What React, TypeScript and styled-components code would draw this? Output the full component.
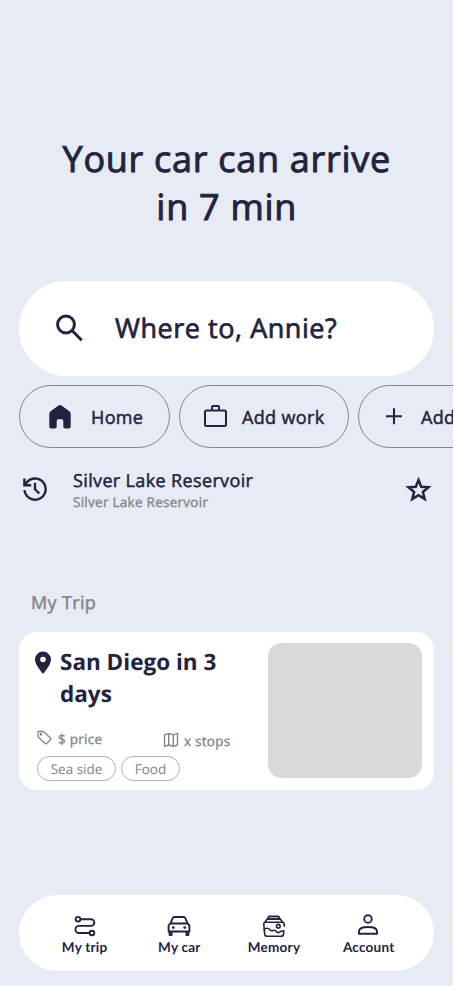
import React from "react";
import styled, { createGlobalStyle, css } from "styled-components";

const ink = "#23233f";
const grey = "#858585";

const GlobalStyle = createGlobalStyle`
  body { margin: 0; background: #fff; }
  * { box-sizing: border-box; }
`;

/* Open Sans at a weight between regular and semi-bold */
const medium = css`
  font-weight: 400;
  letter-spacing: 0.02em;
  -webkit-text-stroke: 0.026em currentColor;
`;

const Screen = styled.main`
  width: 453.4px;
  height: 986px;
  padding: 135px 0 0 19px;
  overflow: hidden;
  background: #e6ebf4;
  color: ${ink};
  font-family: "Open Sans", "Noto Sans", sans-serif;
  text-rendering: geometricPrecision;
`;

const Title = styled.h1`
  width: 415.4px;
  height: 146px;
  margin: 0;
  font-size: 36px;
  line-height: 48px;
  text-align: center;
  ${medium}
`;

const Search = styled.div`
  display: flex;
  align-items: center;
  width: 415.4px;
  height: 95px;
  padding: 0 0 3px 36px;
  border-radius: 48px;
  background: #fff;
  font-size: 27px;
  white-space: nowrap;
  ${medium}
  svg { margin: 3px 31px 0 0; }
`;

const Chips = styled.div`
  display: flex;
  gap: 9px;
  margin-top: 9px;
`;

const Chip = styled.button<{ $width: number; $pad: number; $gap: number }>`
  display: flex;
  flex: none;
  align-items: center;
  gap: ${(p) => p.$gap}px;
  width: ${(p) => p.$width}px;
  height: 62.5px;
  padding: 0 0 0 ${(p) => p.$pad}px;
  border: 1px solid #858585;
  border-radius: 32px;
  background: transparent;
  color: ${ink};
  font: 400 18px "Open Sans", sans-serif;
  white-space: nowrap;
  ${medium}
  span { margin-top: 2px; }
`;

const Recent = styled.section`
  display: flex;
  align-items: flex-start;
  width: 415.4px;
  height: 145.5px;
  padding: 20.5px 2px 0 3px;
  > svg { margin-top: 7.5px; }
`;

const Place = styled.div`
  flex: 1;
  margin-left: 25px;
`;

const PlaceName = styled.div`
  padding-top: 1px;
  font-size: 18px;
  line-height: 24px;
  ${medium}
`;

const PlaceDetail = styled.div`
  color: ${grey};
  font-size: 13.5px;
  line-height: 19px;
  ${medium}
`;

const SectionTitle = styled.h2`
  height: 39px;
  margin: 0 0 0 12px;
  color: ${grey};
  font-size: 18px;
  line-height: 20px;
  ${medium}
`;

const Card = styled.article`
  display: flex;
  justify-content: space-between;
  width: 415.4px;
  height: 158px;
  padding: 11px 12.5px 0 16px;
  border-radius: 18px;
  background: #fff;
`;

const Trip = styled.div`
  width: 215px;
`;

const TripHeading = styled.div`
  display: flex;
  gap: 9px;
  height: 84.5px;
  padding-top: 3px;
  svg { flex: none; margin-top: 5px; }
`;

const TripName = styled.h3`
  margin: 0;
  font-size: 22.5px;
  font-weight: 700;
  line-height: 32px;
`;

const Facts = styled.div`
  display: flex;
  justify-content: space-between;
  height: 28px;
  padding: 0 19.5px 0 1px;
  color: ${grey};
  font-size: 13.5px;
  line-height: 22px;
  ${medium}
`;

const Fact = styled.div<{ $drop?: number }>`
  display: flex;
  align-items: flex-start;
  gap: 5px;
  padding-top: ${(p) => p.$drop ?? 0}px;
  svg { margin-top: 2px; }
`;

const Tags = styled.div`
  display: flex;
  gap: 5px;
  padding-left: 2px;
`;

const Tag = styled.span<{ $width: number }>`
  width: ${(p) => p.$width}px;
  height: 25px;
  border: 1px solid #b0b0b0;
  border-radius: 13px;
  color: ${grey};
  font-size: 13.5px;
  line-height: 25px;
  text-align: center;
`;

const Photo = styled.div`
  width: 153.5px;
  height: 135px;
  border-radius: 13.5px;
  background: #d9d9d9;
`;

const Nav = styled.nav`
  display: grid;
  grid-template-columns: repeat(4, 94.7px);
  justify-content: center;
  width: 415.4px;
  height: 76px;
  margin-top: 105px;
  padding-top: 18px;
  border-radius: 39px;
  background: #fff;
`;

const NavItem = styled.a`
  display: flex;
  flex-direction: column;
  align-items: center;
  font: 700 13.5px/16px Lato, sans-serif;
  letter-spacing: 0.25px;
  svg { display: block; }
`;

const RouteIcon = () => (
  <svg width="26" height="26" viewBox="0 0 26 26" fill="none" stroke={ink} strokeWidth="1.9">
    <circle cx="6" cy="6.2" r="2.3" />
    <circle cx="20" cy="20" r="2.3" />
    <path d="M8.5 6.2H19a3.3 3.3 0 0 1 0 6.7H7a3.5 3.5 0 0 0 0 7.1h10.5" />
  </svg>
);

const CarIcon = () => (
  <svg width="26" height="26" viewBox="0 0 26 26" fill="none" stroke={ink} strokeWidth="1.9" strokeLinejoin="round" strokeLinecap="round">
    <path d="M4.4 10.5h17.2M4.4 10.5l2.2-5.2q.5-1.3 1.7-1.3h9.4q1.2 0 1.7 1.3l2.2 5.2 1.8 1.8v6.2H2.6v-6.2zM3.6 18.5V22h2v-3.5M22.4 18.5V22h-2v-3.5" />
    <circle cx="7.3" cy="14.6" r="1.4" fill={ink} stroke="none" />
    <circle cx="18.7" cy="14.6" r="1.4" fill={ink} stroke="none" />
  </svg>
);

const MemoryIcon = () => (
  <svg width="26" height="26" viewBox="0 0 26 26" fill="none" stroke={ink} strokeWidth="1.6" strokeLinejoin="round" strokeLinecap="round">
    <path d="M6.5 6 8 3.2h9.5L19 6z" fill="#a2a2b3" />
    <path d="M4.2 8.8 6 6.2h13.5l1.8 2.6" />
    <path d="M23.2 13.2v-2q0-2-2-2H4.8q-2.2 0-2 2.1l.9 9.8q.2 2.2 2.4 2.2h13.8q2.4 0 2.6-2.2l.3-3.1" />
    <path d="M3 16.8q3.2-3.1 6 0 1.5 1.4 3 .7 2-.8 3.6 1.1 1.5 1.6 3 .5 1.7-1.4 4-1.1" />
    <circle cx="17.3" cy="13.2" r="1.8" />
  </svg>
);

export default function App() {
  return (
    <>
      <GlobalStyle />
      <Screen>
        <Title>Your car can arrive<br />in 7 min</Title>
        <Search>
          <svg width="29" height="29" viewBox="0 0 29 29" fill="none" stroke={ink} strokeWidth="3">
            <circle cx="11" cy="10.5" r="8.4" />
            <path d="m17 16.5 9.7 9.7" />
          </svg>
          <span>Where to, Annie?</span>
        </Search>
        <Chips>
          <Chip $width={151} $pad={26} $gap={18}>
            <svg width="27" height="27" viewBox="0 0 27 27" fill={ink}>
              <path d="M14 2q-.8 0-1.5.6L4.6 8.3Q3.3 9.3 3.3 10.8v12.9q0 1.8 1.8 1.8h3.7q1.9 0 1.9-1.8V18q0-1.8 1.5-1.8h3.6q1.5 0 1.5 1.8v5.7q0 1.8 1.9 1.8h3.7q1.8 0 1.8-1.8V10.8q0-1.5-1.3-2.5l-7.9-5.7Q14.8 2 14 2Z" />
            </svg>
            <span>Home</span>
          </Chip>
          <Chip $width={170} $pad={22} $gap={13}>
            <svg width="27" height="27" viewBox="0 0 27 27" fill="none" stroke={ink} strokeWidth="2" strokeLinejoin="round">
              <rect x="3" y="7.5" width="21" height="15.5" rx="1.5" />
              <path d="M10 7.3V4q0-1 1-1h5q1 0 1 1v3.3" />
            </svg>
            <span>Add work</span>
          </Chip>
          <Chip $width={151} $pad={24} $gap={16}>
            <svg width="22" height="22" viewBox="0 0 22 22" stroke={ink} strokeWidth="2.1">
              <path d="M3 11.2h16M11 3.2v16" />
            </svg>
            <span>Add</span>
          </Chip>
        </Chips>
        <Recent>
          <svg width="26" height="26" viewBox="0 0 26 26" fill="none" stroke={ink} strokeWidth="2.4">
            <path d="M2.5 14A10.6 10.6 0 1 0 5 6.2L2.7 8.6M2.4 2.5v6.8h6.8M13 6.8v6.5l4.3 4.2" />
          </svg>
          <Place>
            <PlaceName>Silver Lake Reservoir</PlaceName>
            <PlaceDetail>Silver Lake Reservoir</PlaceDetail>
          </Place>
          <svg width="27" height="27" viewBox="0 0 27 27" fill="none" stroke={ink} strokeWidth="2.5">
            <path d="m13.5 4 2.7 6.7 7.3.6-5.6 4.7 1.8 7.1-6.2-3.9-6.2 3.9 1.8-7.1-5.6-4.7 7.3-.6z" />
          </svg>
        </Recent>
        <SectionTitle>My Trip</SectionTitle>
        <Card>
          <Trip>
            <TripHeading>
              <svg width="16" height="23" viewBox="0 0 16 23" fill={ink}>
                <path fillRule="evenodd" d="M8 .6A8 7.9 0 0 0 0 8.5C0 14.3 8 22.8 8 22.8s8-8.5 8-14.3A8 7.9 0 0 0 8 .6Zm0 10.7a2.8 2.8 0 1 1 0-5.6 2.8 2.8 0 0 1 0 5.6Z" />
              </svg>
              <TripName>San Diego in 3<br />days</TripName>
            </TripHeading>
            <Facts>
              <Fact>
                <svg width="17" height="17" viewBox="0 0 17 17" fill="none" stroke={grey} strokeWidth="1.3" strokeLinejoin="round">
                  <path d="M2 1.5h5.5l7 6.4q.8.8 0 1.6l-3.8 4q-.8.8-1.6 0L2 6.8z" />
                  <circle cx="5" cy="4.3" r=".7" fill={grey} />
                </svg>
                <span>$ price</span>
              </Fact>
              <Fact $drop={2}>
                <svg width="16" height="17" viewBox="0 0 16 17" fill="none" stroke={grey} strokeWidth="1.4" strokeLinejoin="round">
                  <path d="m1.5 2.8 4.2-1.4 4.6 1.4 4.2-1.4v11.6l-4.2 1.4-4.6-1.4-4.2 1.4zM5.7 1.4V13M10.3 2.8v11.6" />
                </svg>
                <span>x stops</span>
              </Fact>
            </Facts>
            <Tags>
              <Tag $width={79}>Sea side</Tag>
              <Tag $width={59}>Food</Tag>
            </Tags>
          </Trip>
          <Photo />
        </Card>
        <Nav>
          <NavItem><RouteIcon />My trip</NavItem>
          <NavItem><CarIcon />My car</NavItem>
          <NavItem><MemoryIcon />Memory</NavItem>
          <NavItem>
            <svg width="26" height="26" viewBox="0 0 26 26" fill="none" stroke={ink} strokeWidth="1.9">
              <circle cx="12" cy="6" r="3.8" />
              <path d="M3 20.7v-2.2q0-4.5 9-4.5t9 4.5v2.2z" />
            </svg>
            Account
          </NavItem>
        </Nav>
      </Screen>
    </>
  );
}
